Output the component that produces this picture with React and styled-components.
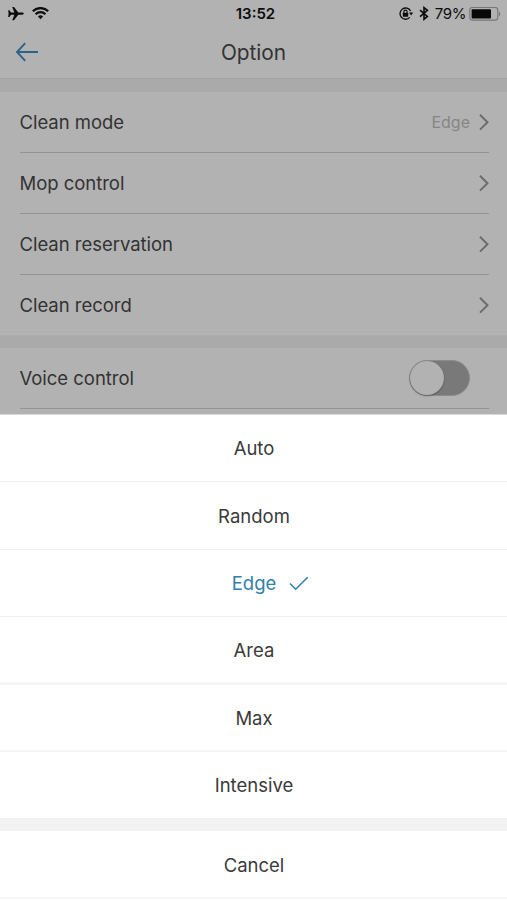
import React from "react";
import styled, { createGlobalStyle } from "styled-components";

const GlobalStyle = createGlobalStyle`
  * { box-sizing: border-box; }
  html, body { margin: 0; padding: 0; background: #b2b2b2; }
  body { font-family: Inter, "Liberation Sans", sans-serif; color: #333; overflow: hidden; }
`;

const Screen = styled.div`
  position: relative;
  width: 507px;
  height: 900px;
  overflow: hidden;
  background: #b2b2b2;
`;

const StatusBar = styled.div`
  display: grid;
  grid-template-columns: 1fr auto 1fr;
  align-items: center;
  height: 27px;
  padding: 0 6px 0 8px;
  color: #0c0c0c;
`;

const StatusGroup = styled.div`
  display: flex;
  align-items: center;
  justify-content: ${(p) => (p.$end ? "flex-end" : "flex-start")};
`;

const Clock = styled.span`
  font-size: 15px;
  font-weight: 600;
  line-height: 26px;
  padding-left: 2px;
`;

const Percent = styled.span`
  font-size: 15px;
  letter-spacing: -0.4px;
  line-height: 26px;
  margin: 0 3px 0 6px;
`;

const Glyph = styled.svg`
  display: block;
  flex: none;
  margin-left: ${(p) => p.$gap || 0}px;
`;

const TitleBar = styled.header`
  display: grid;
  grid-template-columns: 40px 1fr 40px;
  align-items: center;
  height: 51px;
  padding: 0 15px;
`;

const Title = styled.h1`
  margin: 0;
  font-size: 20.8px;
  font-weight: 400;
  line-height: 50px;
  text-align: center;
`;

const BackButton = styled.button`
  display: flex;
  padding: 0 0 1px;
  border: 0;
  background: none;
`;

const Band = styled.div`
  height: ${(p) => p.$height}px;
  background: #aaa;
  border-top: 1px solid ${(p) => p.$edge};
`;

const Group = styled.section`
  padding: 0 18px 0 19.5px;
`;

const Row = styled.div`
  display: flex;
  align-items: center;
  height: ${(p) => (p.$last ? 60 : 61)}px;
  border-bottom: ${(p) => (p.$last ? "0" : "1px solid #939393")};
`;

const RowLabel = styled.span`
  flex: 1;
  font-size: 18.5px;
  letter-spacing: -0.03px;
`;

const RowValue = styled.span`
  font-size: 16px;
  color: #868686;
  margin-right: 9px;
`;

const Switch = styled.div`
  display: flex;
  width: 61px;
  height: 36px;
  margin-right: 19px;
  border-radius: 18px;
  background: #797979;
  border: 1px solid #8b8b8b;
`;

const Knob = styled.div`
  width: 34px;
  height: 34px;
  border-radius: 50%;
  background: #b2b2b2;
  box-shadow: 0 1px 2px rgba(0, 0, 0, 0.3);
`;

const Sheet = styled.div`
  position: absolute;
  left: 0;
  right: 0;
  bottom: 0;
  height: 486px;
  background: #fff;
  border-top: 1px solid #d9d9d9;
`;

const Option = styled.div`
  display: flex;
  align-items: center;
  justify-content: center;
  height: ${(p) => p.$height || 67.4}px;
  padding-left: 1px;
  padding-top: ${(p) => p.$shift || 0}px;
  font-size: 18.5px;
  color: ${(p) => (p.$selected ? "#317fad" : "#3a3a3a")};
  border-bottom: ${(p) => p.$line || 1}px solid ${(p) => (p.$line ? "#f6f6f6" : "#f0f0f0")};
`;

const OptionText = styled.span`
  position: relative;
`;

const CheckMark = styled.svg`
  position: absolute;
  left: calc(100% + 13px);
  top: 4px;
`;

const SheetGap = styled.div`
  height: 12px;
  background: #f2f2f2;
`;

const Chevron = () => (
  <Glyph width="10" height="17" viewBox="0 0 10 17" fill="none" stroke="#6b6b6b" strokeWidth="1.9">
    <path d="M1 .8 L8.5 8.2 L1 15.6" />
  </Glyph>
);

const Plane = () => (
  <Glyph width="16" height="14" viewBox="0 0 16 14" fill="currentColor">
    <path d="M15.8 6.6c0 .7-.8 1.1-1.7 1.1h-3.8L6 13.3H4.2L6.4 7.8H3L1.4 9.9H.2L.6 6.6.2 3.3h1.2L3 5.4h3.4L4.2 0H6l4.3 5.5h3.8c.9 0 1.7.4 1.7 1.1z" />
  </Glyph>
);

const Wifi = () => (
  <Glyph $gap={8} width="17" height="13" viewBox="0 0 17 13" fill="none" stroke="currentColor" strokeWidth="2.2">
    <path d="M.8 4.2a11 11 0 0 1 15.4 0M3.6 7.2a7 7 0 0 1 9.8 0" />
    <path d="M8.5 12.3 5.9 9.6a3.7 3.7 0 0 1 5.2 0z" fill="currentColor" stroke="none" />
  </Glyph>
);

const RotationLock = () => (
  <Glyph width="15" height="14" viewBox="0 0 15 14" fill="none" stroke="currentColor" strokeWidth="1.3">
    <path d="M11.6 4A5.6 5.6 0 1 0 10.8 10.4" />
    <path d="M10 5.6h4.2l-2.1 2.8z" fill="currentColor" stroke="none" />
    <rect x="3.8" y="5.8" width="5.4" height="4" rx=".5" fill="currentColor" stroke="none" />
    <path d="M4.9 6.2V4.7a1.6 1.6 0 0 1 3.2 0v1.5" strokeWidth="1.1" />
  </Glyph>
);

const Bluetooth = () => (
  <Glyph $gap={5} width="10" height="15" viewBox="0 0 10 15" fill="none" stroke="currentColor" strokeWidth="1.6">
    <path d="M1 4.2 8.4 10.4 5 13.2V1.6l3.4 2.7L1 10.6" />
  </Glyph>
);

const Battery = () => (
  <Glyph width="32" height="14" viewBox="0 0 32 14">
    <rect x=".8" y=".5" width="28" height="12.6" rx="2.8" fill="none" stroke="#777" strokeWidth="1.1" />
    <rect x="2.6" y="2.2" width="19.4" height="9.2" rx="1" fill="#080808" />
    <path d="M30 4.4c1.6.7 1.6 4.2 0 4.9z" fill="#777" />
  </Glyph>
);

const settings = [
  { label: "Clean mode", value: "Edge" },
  { label: "Mop control" },
  { label: "Clean reservation" },
  { label: "Clean record" },
];

const modes = [
  { label: "Auto" },
  { label: "Random" },
  { label: "Edge", selected: true },
  { label: "Area", line: 3, shift: 2 },
  { label: "Max", line: 2, shift: 1 },
  { label: "Intensive" },
];

export default function App() {
  return (
    <>
      <GlobalStyle />
      <Screen>
        <StatusBar>
          <StatusGroup>
            <Plane />
            <Wifi />
          </StatusGroup>
          <Clock>13:52</Clock>
          <StatusGroup $end>
            <RotationLock />
            <Bluetooth />
            <Percent>79%</Percent>
            <Battery />
          </StatusGroup>
        </StatusBar>
        <TitleBar>
          <BackButton aria-label="Back">
            <Glyph width="24" height="20" viewBox="0 0 24 20" fill="none" stroke="#2b6488" strokeWidth="1.9">
              <path d="M10.2 1.2 2 10l8.2 8.8M2 10h21" />
            </Glyph>
          </BackButton>
          <Title>Option</Title>
        </TitleBar>
        <Band $height={14} $edge="#a4a4a4" />
        <Group>
          {settings.map((s, i) => (
            <Row key={s.label} $last={i === settings.length - 1}>
              <RowLabel>{s.label}</RowLabel>
              {s.value && <RowValue>{s.value}</RowValue>}
              <Chevron />
            </Row>
          ))}
        </Group>
        <Band $height={13} $edge="#aeaeae" />
        <Group>
          <Row>
            <RowLabel>Voice control</RowLabel>
            <Switch role="switch" aria-checked="false">
              <Knob />
            </Switch>
          </Row>
        </Group>
        <Sheet>
          {modes.map((m) => (
            <Option
              key={m.label}
              $selected={m.selected}
              $line={m.line}
              $shift={m.shift}
              $height={m.height}
            >
              <OptionText>
                {m.label}
                {m.selected && (
                  <CheckMark width="20" height="15" viewBox="0 0 20 15" fill="none" stroke="#317fad" strokeWidth="1.6">
                    <path d="M1 7.5 6.7 13.2 18.7 1.2" />
                  </CheckMark>
                )}
              </OptionText>
            </Option>
          ))}
          <SheetGap />
          <Option $line={2} $shift={2}>
            <OptionText>Cancel</OptionText>
          </Option>
        </Sheet>
      </Screen>
    </>
  );
}
